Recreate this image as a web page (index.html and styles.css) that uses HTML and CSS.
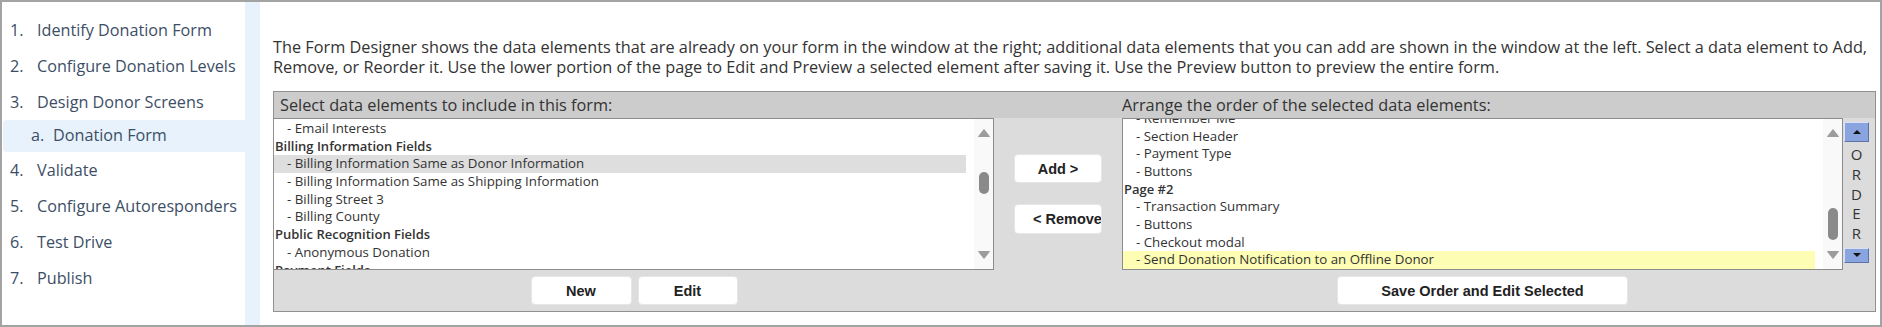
FILE: index.html
```html
<!DOCTYPE html>
<html lang="en">
<head>
<meta charset="utf-8">
<title>Form Designer</title>
<link rel="stylesheet" href="styles.css">
</head>
<body>
<div class="frame">
  <nav class="steps">
    <ol class="step-list">
      <li class="step"><span class="num">1.</span><span>Identify Donation Form</span></li>
      <li class="step"><span class="num">2.</span><span>Configure Donation Levels</span></li>
      <li class="step"><span class="num">3.</span><span>Design Donor Screens</span></li>
      <li class="substep"><span class="num">a.</span><span>Donation Form</span></li>
      <li class="step"><span class="num">4.</span><span>Validate</span></li>
      <li class="step"><span class="num">5.</span><span>Configure Autoresponders</span></li>
      <li class="step"><span class="num">6.</span><span>Test Drive</span></li>
      <li class="step"><span class="num">7.</span><span>Publish</span></li>
    </ol>
  </nav>
  <main class="content">
    <p class="intro">The Form Designer shows the data elements that are already on your form in the window at the right; additional data elements that you can add are shown in the window at the left. Select a data element to Add,<br>Remove, or Reorder it. Use the lower portion of the page to Edit and Preview a selected element after saving it. Use the Preview button to preview the entire form.</p>
    <section class="designer">
      <div class="hdr hdr-left">Select data elements to include in this form:</div>
      <div class="hdr"></div>
      <div class="hdr hdr-right">Arrange the order of the selected data elements:</div>
      <div class="hdr"></div>

      <div class="listbox listbox-left">
        <div class="options">
          <div class="opt">- Email Interests</div>
          <div class="grp">Billing Information Fields</div>
          <div class="opt sel">- Billing Information Same as Donor Information</div>
          <div class="opt">- Billing Information Same as Shipping Information</div>
          <div class="opt">- Billing Street 3</div>
          <div class="opt">- Billing County</div>
          <div class="grp">Public Recognition Fields</div>
          <div class="opt">- Anonymous Donation</div>
          <div class="grp">Payment Fields</div>
        </div>
        <div class="scrollbar">
          <div class="arrow"><svg width="12" height="8" viewBox="0 0 12 8"><polygon points="6,0.5 11.5,7.5 0.5,7.5" fill="#9c9c9c" stroke="#9c9c9c" stroke-linejoin="round"/></svg></div>
          <div class="track"><div class="thumb" style="margin-top:25px;height:22px"></div></div>
          <div class="arrow"><svg width="12" height="8" viewBox="0 0 12 8"><polygon points="0.5,0.5 11.5,0.5 6,7.5" fill="#9c9c9c" stroke="#9c9c9c" stroke-linejoin="round"/></svg></div>
        </div>
      </div>

      <div class="transfer">
        <button class="btn btn-add">Add &gt;</button>
        <button class="btn btn-remove">&lt; Remove</button>
      </div>

      <div class="listbox listbox-right">
        <div class="options options-end">
          <div class="opt">- Remember Me</div>
          <div class="opt">- Section Header</div>
          <div class="opt">- Payment Type</div>
          <div class="opt">- Buttons</div>
          <div class="grp">Page #2</div>
          <div class="opt">- Transaction Summary</div>
          <div class="opt">- Buttons</div>
          <div class="opt">- Checkout modal</div>
          <div class="opt hl">- Send Donation Notification to an Offline Donor</div>
        </div>
        <div class="scrollbar">
          <div class="arrow"><svg width="12" height="8" viewBox="0 0 12 8"><polygon points="6,0.5 11.5,7.5 0.5,7.5" fill="#9c9c9c" stroke="#9c9c9c" stroke-linejoin="round"/></svg></div>
          <div class="track"><div class="thumb" style="margin-top:61px;height:32px"></div></div>
          <div class="arrow"><svg width="12" height="8" viewBox="0 0 12 8"><polygon points="0.5,0.5 11.5,0.5 6,7.5" fill="#9c9c9c" stroke="#9c9c9c" stroke-linejoin="round"/></svg></div>
        </div>
      </div>

      <div class="order">
        <button class="order-btn order-up" aria-label="Move up"><svg width="8" height="4" viewBox="0 0 8 4"><polygon points="4,0 8,4 0,4" fill="#111"/></svg></button>
        <div class="order-label"><span>O</span><span>R</span><span>D</span><span>E</span><span>R</span></div>
        <button class="order-btn order-down" aria-label="Move down"><svg width="8" height="4" viewBox="0 0 8 4"><polygon points="0,0 8,0 4,4" fill="#111"/></svg></button>
      </div>

      <div class="actions">
        <button class="btn btn-new">New</button>
        <button class="btn btn-edit">Edit</button>
      </div>
      <div></div>
      <div class="actions">
        <button class="btn btn-save">Save Order and Edit Selected</button>
      </div>
      <div></div>
    </section>
  </main>
</div>
</body>
</html>
```

FILE: styles.css
```css
* { box-sizing: border-box; }

html, body {
  margin: 0;
  padding: 0;
  background: #ffffff;
}

body {
  font-family: "Open Sans", "Noto Sans", sans-serif;
  color: #333333;
}

.frame {
  width: 1882px;
  height: 327px;
  border: 2px solid #a3a3a3;
  display: flex;
  background: #ffffff;
}

/* ---------- sidebar steps ---------- */
.steps {
  width: 258px;
  flex: 0 0 258px;
  border-right: 15px solid #e8f2fc;
  padding-top: 10px;
}

.step-list {
  list-style: none;
  margin: 0;
  padding: 0;
}

.step {
  display: flex;
  align-items: center;
  height: 36px;
  padding-left: 8px;
  font-size: 16.2px;
  color: #3c4e66;
  white-space: nowrap;
}

.step .num {
  width: 27px;
  flex: 0 0 27px;
}

.substep {
  display: flex;
  align-items: center;
  height: 32px;
  margin-left: 1px;
  padding-left: 28px;
  padding-bottom: 2px;
  font-size: 16.2px;
  color: #3c4e66;
  background: #e8f2fc;
  border-radius: 4px 0 0 4px;
  white-space: nowrap;
}

.substep .num {
  width: 22px;
  flex: 0 0 22px;
}

/* ---------- content ---------- */
.content {
  flex: 1;
  padding: 35px 4px 0 13px;
}

.intro {
  margin: 0 0 14px 0;
  font-size: 16.3px;
  line-height: 20px;
  color: #333333;
  white-space: nowrap;
}

.designer {
  display: grid;
  grid-template-columns: 720px 128px 721px 32px;
  grid-template-rows: 26px 152px 41px;
  border: 1px solid #919191;
  background: #dcdcdc;
}

.hdr {
  background: #cccccc;
  font-size: 16.3px;
  line-height: 26px;
  color: #333333;
  white-space: nowrap;
}

.hdr-left {
  padding-left: 6px;
}

/* ---------- list boxes ---------- */
.listbox {
  display: flex;
  background: #ffffff;
  border: 1px solid #8c8c8c;
  height: 152px;
  overflow: hidden;
}

.listbox-left {
  border-left: none;
}

.options {
  flex: 1;
  min-width: 0;
  overflow: hidden;
  display: flex;
  flex-direction: column;
  padding-right: 8px;
  font-size: 13.3px;
  line-height: 17.7px;
  color: #333333;
}

.listbox-left .options {
  padding-top: 1px;
}

.options-end {
  justify-content: flex-end;
}

.opt,
.grp {
  flex-shrink: 0;
  height: 17.7px;
  white-space: nowrap;
}

.opt {
  padding-left: 13px;
}

.grp {
  padding-left: 1px;
  font-size: 13px;
  font-weight: 600;
}

.sel {
  background: #dedede;
}

.hl {
  background: #fdfdb3;
}

.scrollbar {
  width: 19px;
  flex: 0 0 19px;
  background: #f9f9f9;
  display: flex;
  flex-direction: column;
  align-items: center;
}

.arrow {
  height: 28px;
  flex: 0 0 28px;
  display: flex;
  align-items: center;
  justify-content: center;
}

.arrow svg {
  display: block;
}

.track {
  flex: 1;
  width: 100%;
  display: flex;
  flex-direction: column;
  align-items: center;
}

.thumb {
  width: 10px;
  border-radius: 5px;
  background: #8a8a8a;
}

/* ---------- buttons ---------- */
.btn {
  font-family: "Liberation Sans", Arial, sans-serif;
  font-weight: bold;
  font-size: 14.5px;
  color: #222222;
  background: #ffffff;
  border: 1px solid #e6e6e6;
  border-radius: 4px;
  padding: 0;
  height: 29px;
  cursor: pointer;
}

.transfer {
  display: flex;
  flex-direction: column;
  align-items: center;
  padding-top: 36px;
  gap: 21px;
}

.btn-add {
  width: 88px;
}

.btn-remove {
  width: 88px;
  height: 30px;
  text-align: left;
  padding-left: 18px;
  white-space: nowrap;
  overflow: hidden;
}

.actions {
  display: flex;
  justify-content: center;
  align-items: flex-start;
  gap: 6px;
  padding-top: 6px;
}

.btn-new {
  width: 101px;
}

.btn-edit {
  width: 100px;
}

.btn-save {
  width: 291px;
}

/* ---------- order control ---------- */
.order {
  display: flex;
  flex-direction: column;
  align-items: flex-start;
  padding: 4px 0 0 1px;
}

.order-btn {
  width: 25px;
  padding: 0;
  background: #8aa4e0;
  border: 1px solid;
  border-color: #d8e1f7 #5d73a8 #5d73a8 #d8e1f7;
  display: flex;
  align-items: center;
  justify-content: center;
  cursor: pointer;
}

.order-up {
  height: 20px;
}

.order-down {
  height: 15px;
  margin-top: 4px;
}

.order-btn svg {
  display: block;
}

.order-label {
  width: 25px;
  margin-top: 3px;
  display: flex;
  flex-direction: column;
  align-items: center;
  font-size: 15px;
  line-height: 19.75px;
  color: #333333;
}
```
